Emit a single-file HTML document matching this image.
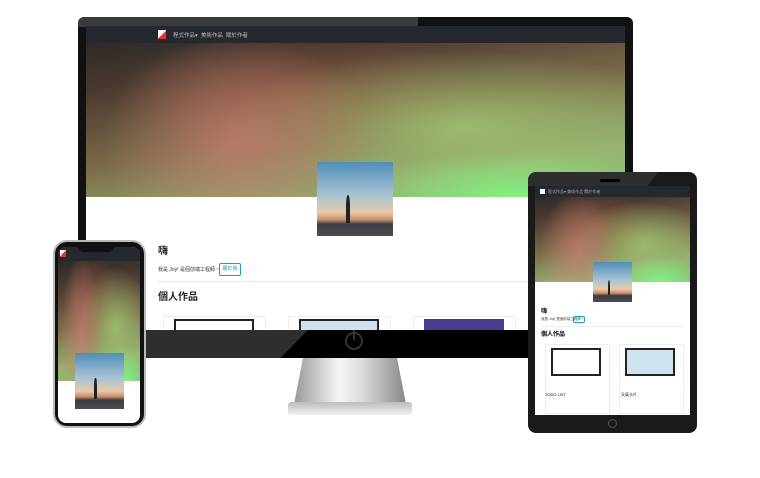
<!DOCTYPE html>
<html><head><meta charset="utf-8"><style>
*{margin:0;padding:0;box-sizing:border-box}
body{width:760px;height:478px;background:#fff;position:relative;overflow:hidden;font-family:"Liberation Sans","Noto Sans CJK TC",sans-serif}
.abs{position:absolute}
.hero{background:
radial-gradient(ellipse 30% 30% at 80% 100%,rgba(130,245,130,.95),transparent),
radial-gradient(ellipse 25% 70% at 28% 65%,rgba(200,130,115,.75),transparent),
radial-gradient(ellipse 45% 50% at 70% 55%,rgba(160,195,115,.85),transparent),
radial-gradient(ellipse 35% 45% at 40% 35%,rgba(140,80,60,.7),transparent),
linear-gradient(170deg,#2c2a28 0%,#4a3a30 20%,#7a6a48 50%,#95b070 80%,#86c076 100%)}
.nav{background:#25282c}
.av{background:linear-gradient(180deg,#4f8fb8 0%,#a9c3d4 45%,#e8c9a8 68%,#c88e6a 78%,#3a3d42 84%,#4a4d52 100%);overflow:hidden}
.av i{position:absolute;left:38%;top:45%;width:6%;height:38%;background:#222;border-radius:40% 40% 10% 10%}
.btn{border:1px solid #17a2b8;color:#17a2b8;border-radius:2px}
</style></head><body>
<!-- monitor -->
<div class="abs" style="left:78px;top:17px;width:555px;height:341px;background:#111;border-radius:6px"></div>
<div class="abs" style="left:78px;top:17px;width:340px;height:10px;background:#3a3a3a;border-radius:6px 0 0 0"></div>
<div class="abs" style="left:86px;top:26px;width:539px;height:304px;background:#fff;overflow:hidden">
 <div class="abs nav" style="left:0;top:0;width:539px;height:17px"></div>
 <div class="abs" style="left:72px;top:4px;width:8px;height:9px;background:linear-gradient(135deg,#fff 50%,#d33 50%)"></div>
 <div class="abs" style="left:87px;top:5px;font-size:5.5px;color:#bbb;white-space:nowrap">程式作品▾&nbsp; 美術作品&nbsp; 關於作者</div>
 <div class="abs hero" style="left:0;top:17px;width:539px;height:154px"></div>
 <div class="abs av" style="left:231px;top:136px;width:76px;height:74px"><i></i></div>
 <div class="abs" style="left:72px;top:216px;font-size:10px;font-weight:bold;color:#222">嗨</div>
 <div class="abs" style="left:72px;top:240px;font-size:5px;color:#333;white-space:nowrap">我是 Joy! 是個前端工程師。</div>
 <div class="abs btn" style="left:133px;top:237px;width:22px;height:13px;font-size:5px;line-height:11px;text-align:center">關於我</div>
 <div class="abs" style="left:72px;top:255px;width:380px;height:1px;background:#e5e5e5"></div>
 <div class="abs" style="left:72px;top:262px;font-size:10px;font-weight:bold;color:#222">個人作品</div>
 <div class="abs" style="left:77px;top:290px;width:103px;height:20px;border:1px solid #eee"></div>
 <div class="abs" style="left:88px;top:293px;width:80px;height:12px;background:#fff;border:2px solid #222;border-bottom:0"></div>
 <div class="abs" style="left:202px;top:290px;width:103px;height:20px;border:1px solid #eee"></div>
 <div class="abs" style="left:213px;top:293px;width:80px;height:12px;background:#cfe2f0;border:2px solid #222;border-bottom:0"></div>
 <div class="abs" style="left:327px;top:290px;width:103px;height:20px;border:1px solid #eee"></div>
 <div class="abs" style="left:338px;top:293px;width:80px;height:12px;background:#4a3b8c"></div>
</div>
<div class="abs" style="left:78px;top:330px;width:555px;height:28px;background:#000"></div>
<div class="abs" style="left:78px;top:330px;width:230px;height:28px;background:#2e2e2e;clip-path:polygon(0 0,100% 0,88% 100%,0 100%)"></div>
<div class="abs" style="left:345px;top:332px;width:18px;height:18px;border:2px solid #333;border-radius:50%"></div>
<div class="abs" style="left:353px;top:330px;width:2px;height:10px;background:#333"></div>
<div class="abs" style="left:294px;top:358px;width:112px;height:46px;background:linear-gradient(90deg,#999,#f5f5f5 40%,#ddd 60%,#888);clip-path:polygon(8% 0,92% 0,100% 100%,0 100%)"></div>
<div class="abs" style="left:288px;top:402px;width:124px;height:13px;background:linear-gradient(180deg,#bbb,#f2f2f2);border-radius:3px"></div>
<!-- phone -->
<div class="abs" style="left:53px;top:240px;width:93px;height:188px;background:#111;border:2px solid #bbb;border-radius:14px"></div>
<div class="abs" style="left:58px;top:247px;width:82px;height:176px;background:#fff;border-radius:8px;overflow:hidden">
 <div class="abs nav" style="left:0;top:0;width:82px;height:14px"></div>
 <div class="abs hero" style="left:0;top:14px;width:82px;height:120px"></div>
 <div class="abs av" style="left:17px;top:106px;width:49px;height:56px"><i></i></div>
</div>
<div class="abs" style="left:78px;top:245px;width:36px;height:7px;background:#111;border-radius:0 0 6px 6px"></div>
<div class="abs" style="left:60px;top:250px;width:6px;height:7px;background:linear-gradient(135deg,#fff 50%,#d33 50%)"></div>
<!-- tablet -->
<div class="abs" style="left:528px;top:172px;width:169px;height:261px;background:#1a1a1a;border-radius:8px"></div>
<div class="abs" style="left:528px;top:172px;width:130px;height:14px;background:#2e2e2e;border-radius:8px 0 0 0;clip-path:polygon(0 0,100% 0,92% 100%,0 100%)"></div>
<div class="abs" style="left:600px;top:179px;width:20px;height:3px;background:#000;border-radius:2px"></div>
<div class="abs" style="left:535px;top:186px;width:155px;height:229px;background:#fff;overflow:hidden">
 <div class="abs nav" style="left:0;top:0;width:155px;height:11px"></div>
 <div class="abs" style="left:5px;top:3px;width:5px;height:5px;background:#fff"></div>
 <div class="abs" style="left:13px;top:3px;font-size:4px;color:#aaa;white-space:nowrap">程式作品▾ 美術作品 關於作者</div>
 <div class="abs hero" style="left:0;top:11px;width:155px;height:85px"></div>
 <div class="abs av" style="left:58px;top:76px;width:39px;height:40px"><i></i></div>
 <div class="abs" style="left:6px;top:120px;font-size:6px;font-weight:bold">嗨</div>
 <div class="abs" style="left:6px;top:131px;font-size:3.5px;color:#444;white-space:nowrap">我是 Joy! 是個前端工程師。</div>
 <div class="abs btn" style="left:38px;top:130px;width:12px;height:7px"></div>
 <div class="abs" style="left:6px;top:140px;width:144px;height:1px;background:#eee"></div>
 <div class="abs" style="left:6px;top:143px;font-size:6px;font-weight:bold">個人作品</div>
 <div class="abs" style="left:10px;top:158px;width:65px;height:70px;border:1px solid #eee"></div>
 <div class="abs" style="left:16px;top:162px;width:50px;height:28px;border:2px solid #222;background:#fff"></div>
 <div class="abs" style="left:10px;top:206px;font-size:4px">TODO LIST</div>
 <div class="abs" style="left:84px;top:158px;width:65px;height:70px;border:1px solid #eee"></div>
 <div class="abs" style="left:90px;top:162px;width:50px;height:28px;border:2px solid #222;background:#cfe2f0"></div>
 <div class="abs" style="left:86px;top:206px;font-size:4px">天氣卡片</div>
</div>
<div class="abs" style="left:608px;top:419px;width:9px;height:9px;border:1px solid #555;border-radius:50%"></div>
</body></html>
